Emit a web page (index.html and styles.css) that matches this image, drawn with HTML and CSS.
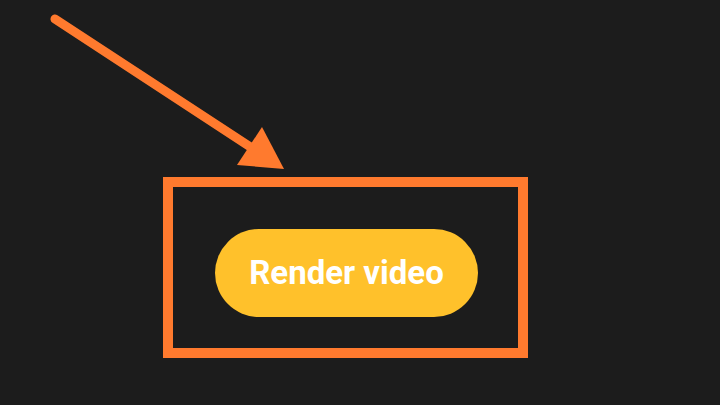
FILE: index.html
```html
<!DOCTYPE html>
<html>
<head>
<meta charset="utf-8">
<link rel="stylesheet" href="styles.css">
</head>
<body>
<div class="page">
  <svg class="arrow" width="720" height="405" viewBox="0 0 720 405">
    <line x1="55" y1="19" x2="258" y2="152" stroke="#ff7a2e" stroke-width="9" stroke-linecap="round"/>
    <polygon points="237,165 262,127 284,169" fill="#ff7a2e"/>
  </svg>
  <div class="frame">
    <button class="render">Render video</button>
  </div>
</div>
</body>
</html>
```
FILE: styles.css
```css
html, body {
  margin: 0;
  padding: 0;
  background: #1c1c1c;
}
.page {
  width: 720px;
  height: 405px;
  position: relative;
  padding: 177px 0 0 163px;
  box-sizing: border-box;
}
.arrow {
  position: absolute;
  left: 0;
  top: 0;
}
.frame {
  width: 365px;
  height: 181px;
  box-sizing: border-box;
  border: 10px solid #ff7a2e;
  padding: 42px 0 0 42px;
}
.render {
  width: 263px;
  height: 88px;
  border: none;
  border-radius: 44px;
  background: #ffc12b;
  color: #ffffff;
  font-family: Roboto, "Liberation Sans", sans-serif;
  font-weight: 700;
  font-size: 33px;
  padding: 0 0 2px 0;
  display: flex;
  align-items: center;
  justify-content: center;
}
```
